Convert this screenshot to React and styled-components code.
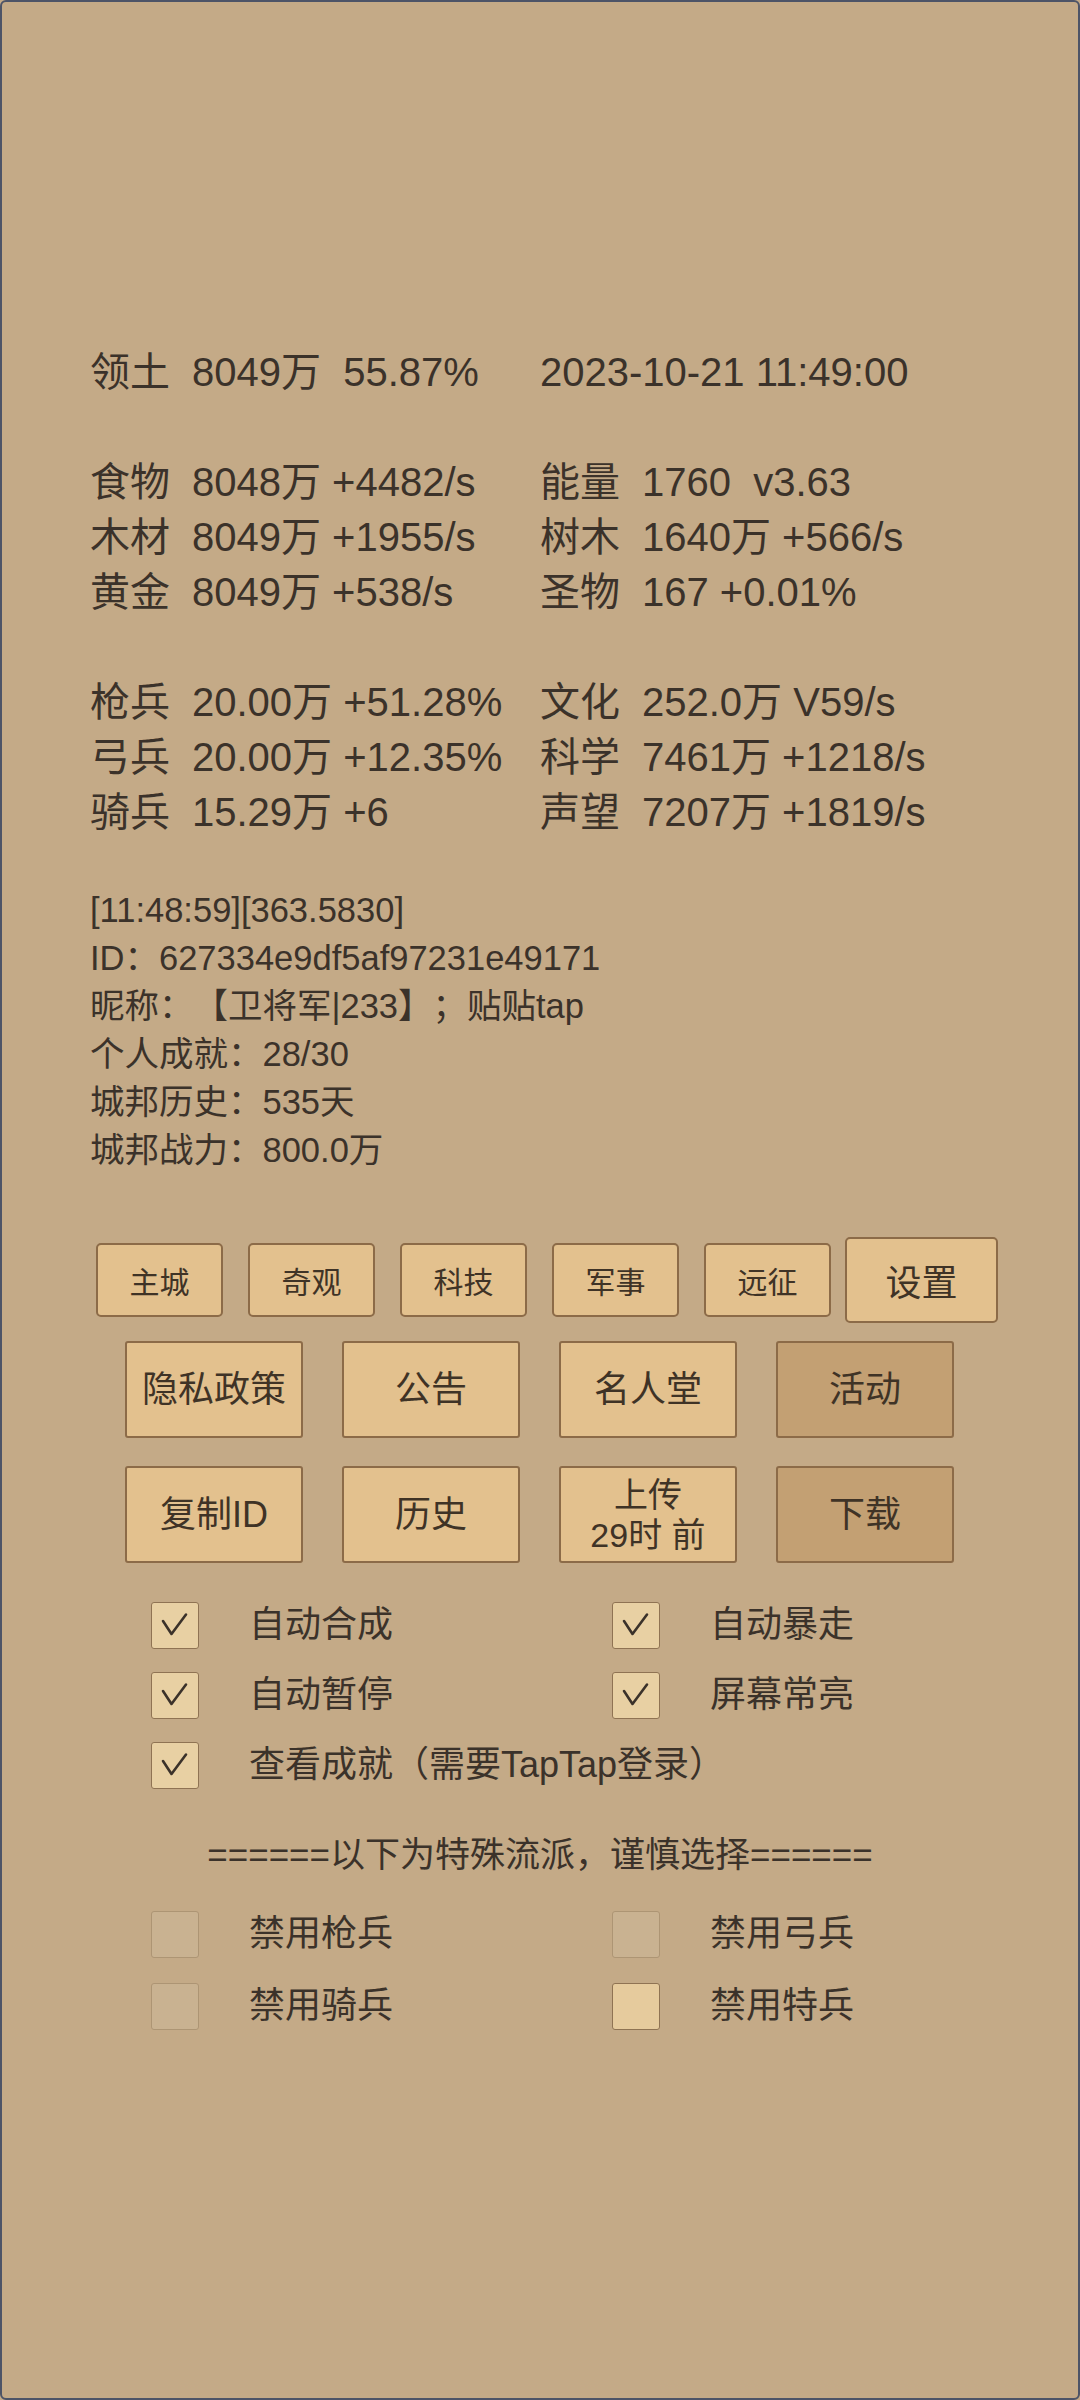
import React from 'react'
import styled, { createGlobalStyle } from 'styled-components'

const GlobalStyle = createGlobalStyle`
  html, body {
    margin: 0;
    padding: 0;
    background: #c4aa87;
  }
  body {
    font-family: "Liberation Sans", "Noto Sans CJK SC", sans-serif;
    text-spacing-trim: space-all;
  }
`

const statGroups = [
  [
    [['领土', '8049万  55.87%'], [null, '2023-10-21 11:49:00']],
  ],
  [
    [['食物', '8048万 +4482/s'], ['能量', '1760  v3.63']],
    [['木材', '8049万 +1955/s'], ['树木', '1640万 +566/s']],
    [['黄金', '8049万 +538/s'], ['圣物', '167 +0.01%']],
  ],
  [
    [['枪兵', '20.00万 +51.28%'], ['文化', '252.0万 V59/s']],
    [['弓兵', '20.00万 +12.35%'], ['科学', '7461万 +1218/s']],
    [['骑兵', '15.29万 +6'], ['声望', '7207万 +1819/s']],
  ],
]

const logLines = [
  '[11:48:59][363.5830]',
  'ID：627334e9df5af97231e49171',
  '昵称：【卫将军|233】；贴贴tap',
  '个人成就：28/30',
  '城邦历史：535天',
  '城邦战力：800.0万',
]

const tabs = ['主城', '奇观', '科技', '军事', '远征']

const menuRows = [
  [
    { text: '隐私政策' },
    { text: '公告' },
    { text: '名人堂' },
    { text: '活动', dark: true },
  ],
  [
    { text: '复制ID' },
    { text: '历史' },
    { text: '上传\n29时 前', small: true },
    { text: '下载', dark: true },
  ],
]

const options = [
  { label: '自动合成', checked: true },
  { label: '自动暴走', checked: true },
  { label: '自动暂停', checked: true },
  { label: '屏幕常亮', checked: true },
  { label: '查看成就（需要TapTap登录）', checked: true, wide: true },
]

const bans = [
  { label: '禁用枪兵' },
  { label: '禁用弓兵' },
  { label: '禁用骑兵' },
  { label: '禁用特兵', light: true },
]

function CheckMark() {
  return (
    <svg width="48" height="47" viewBox="0 0 48 47">
      <path
        d="M12 20 L20.5 33 L35 13.5"
        fill="none"
        stroke="#3b322a"
        strokeWidth="2.6"
        strokeLinecap="round"
        strokeLinejoin="round"
      />
    </svg>
  )
}

function Option({ label, checked, light, wide }) {
  return (
    <OptionRow $wide={wide}>
      <Box $checked={checked} $light={light}>
        {checked && <CheckMark />}
      </Box>
      <OptionLabel>{label}</OptionLabel>
    </OptionRow>
  )
}

export default function App() {
  return (
    <>
      <GlobalStyle />
      <Page>
        {statGroups.map((group, gi) => (
          <StatGroup key={gi} $first={gi === 0}>
            {group.map((row) =>
              row.map(([label, value], ci) => (
                <StatCell key={ci}>
                  {label && <StatLabel>{label}</StatLabel>}
                  {value}
                </StatCell>
              ))
            )}
          </StatGroup>
        ))}

        <Log>
          {logLines.map((line) => (
            <LogLine key={line}>{line}</LogLine>
          ))}
        </Log>

        <TabBar>
          {tabs.map((t) => (
            <TabButton key={t}>{t}</TabButton>
          ))}
          <TabButton $big>设置</TabButton>
        </TabBar>

        <MenuGrid>
          {menuRows.flat().map((b) => (
            <MenuButton key={b.text} $dark={b.dark} $small={b.small}>
              {b.text}
            </MenuButton>
          ))}
        </MenuGrid>

        <Options>
          {options.map((o) => (
            <Option key={o.label} {...o} />
          ))}
        </Options>

        <Divider>======以下为特殊流派，谨慎选择======</Divider>

        <Options $tight>
          {bans.map((o) => (
            <Option key={o.label} {...o} />
          ))}
        </Options>
      </Page>
    </>
  )
}

const Page = styled.div`
  width: 1080px;
  height: 2400px;
  box-sizing: border-box;
  border: 2px solid #4d5467;
  border-radius: 6px;
  background: #c4aa87;
  color: #3b322a;
  padding-top: 343px;
  overflow: hidden;
`

const StatGroup = styled.div`
  display: grid;
  grid-template-columns: 450px 1fr;
  padding-left: 88px;
  margin-top: ${(p) => (p.$first ? '0' : '55px')};
  font-size: 40px;
  line-height: 55px;
`

const StatCell = styled.div`
  display: flex;
  white-space: pre;
`

const StatLabel = styled.span`
  display: inline-block;
  width: 102px;
  flex-shrink: 0;
`

const Log = styled.div`
  margin-top: 46px;
  padding-left: 88px;
  font-size: 34.5px;
  line-height: 48px;
`

const LogLine = styled.div`
  white-space: pre;
`

const TabBar = styled.div`
  display: flex;
  align-items: center;
  gap: 25px;
  margin-top: 63px;
  padding-left: 94px;
  height: 86px;
`

const TabButton = styled.div`
  box-sizing: border-box;
  width: ${(p) => (p.$big ? '153px' : '127px')};
  height: ${(p) => (p.$big ? '86px' : '74px')};
  margin-left: ${(p) => (p.$big ? '-11px' : '0')};
  display: flex;
  align-items: center;
  justify-content: center;
  background: #e3c18e;
  border: 2px solid #8c6b48;
  border-radius: 5px;
  font-size: ${(p) => (p.$big ? '36px' : '30px')};
  color: #3f3326;
`

const MenuGrid = styled.div`
  display: grid;
  grid-template-columns: repeat(4, 178px);
  grid-auto-rows: 97px;
  column-gap: 39px;
  row-gap: 28px;
  margin-top: 18px;
  padding-left: 123px;
`

const MenuButton = styled.div`
  box-sizing: border-box;
  display: flex;
  align-items: center;
  justify-content: center;
  text-align: center;
  white-space: pre;
  background: ${(p) => (p.$dark ? '#c3a073' : '#e3c18e')};
  border: 2px solid #8c6b48;
  border-radius: 3px;
  font-size: ${(p) => (p.$small ? '34px' : '36px')};
  line-height: ${(p) => (p.$small ? '40px' : '44px')};
  color: #3f3326;
`

const Options = styled.div`
  display: grid;
  grid-template-columns: 461px 1fr;
  row-gap: ${(p) => (p.$tight ? '24px' : '22px')};
  margin-top: ${(p) => (p.$tight ? '31px' : '38px')};
  padding-left: 149px;
`

const OptionRow = styled.div`
  display: flex;
  align-items: center;
  grid-column: ${(p) => (p.$wide ? '1 / -1' : 'auto')};
`

const Box = styled.div`
  box-sizing: border-box;
  width: 48px;
  height: 47px;
  flex-shrink: 0;
  border-radius: 3px;
  border: 1.5px solid ${(p) => (p.$checked || p.$light ? '#8f7353' : '#ad9574')};
  background: ${(p) =>
    p.$checked ? '#e8d0a3' : p.$light ? '#e6cb9d' : '#c9b291'};
  svg {
    display: block;
    margin: -1.5px;
  }
`

const OptionLabel = styled.span`
  margin-left: 50px;
  font-size: 36px;
  line-height: 48px;
  white-space: pre;
  color: #3b322a;
`

const Divider = styled.div`
  margin-top: 42px;
  text-align: center;
  font-size: 35px;
  line-height: 48px;
  white-space: pre;
`
